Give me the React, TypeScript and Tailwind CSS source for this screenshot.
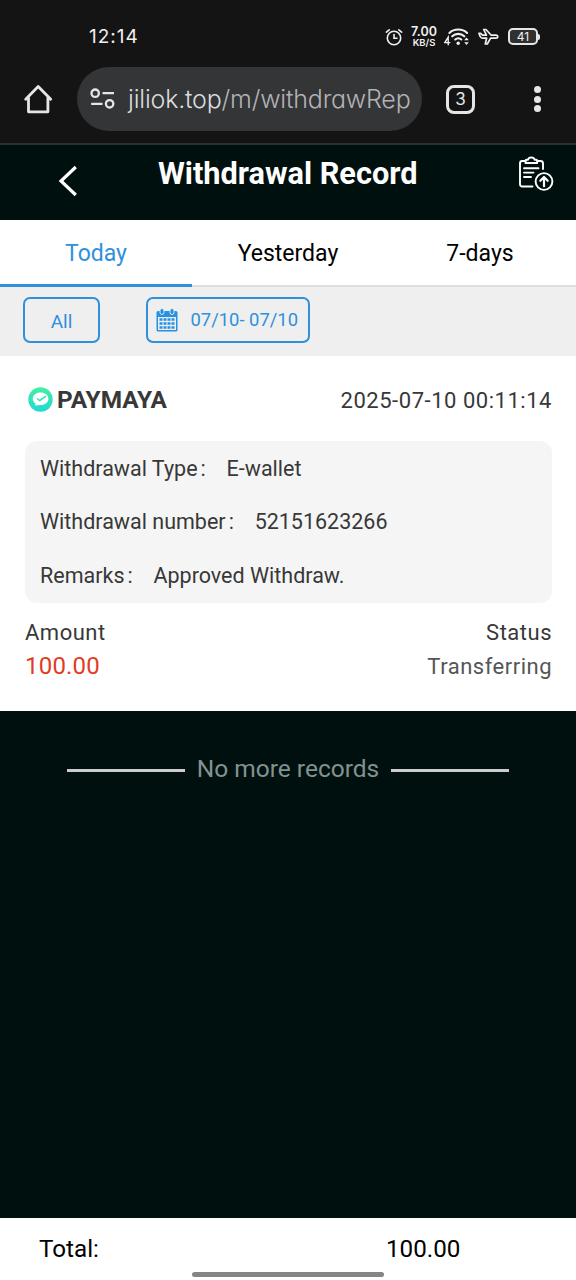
import type { ReactNode } from 'react';

const tabs = [
    { id: 'today', label: 'Today' },
    { id: 'yesterday', label: 'Yesterday' },
    { id: '7-days', label: '7-days' },
];

const details = [
    { label: 'Withdrawal Type', value: 'E-wallet' },
    { label: 'Withdrawal number', value: '52151623266' },
    { label: 'Remarks', value: 'Approved Withdraw.' },
];

function StatusBar() {
    return (
        <div className="flex h-[67px] items-center pt-[6px] pl-[89px] font-['Inter',sans-serif] text-[#f0f0f0]">
            <span className="w-[296px] pt-[2px] text-[19px] tracking-[1px]">12:14</span>
            <svg className="h-[18px] w-[18px]" viewBox="0 0 18 18" fill="none" stroke="currentColor" strokeWidth="1.6" strokeLinecap="round">
                <circle cx="9" cy="10" r="6.7" />
                <path d="M9 6.5V10.3H12M1.4 4.2L4.2 1.8M16.6 4.2L13.8 1.8" />
            </svg>
            <div className="ml-[7px] w-[28px] text-center font-semibold whitespace-nowrap">
                <div className="text-[12.5px] leading-[12px]">7.00</div>
                <div className="text-[9.5px] leading-[10px]">KB/S</div>
            </div>
            <svg className="ml-[6px] h-[20px] w-[26px]" viewBox="0 0 26 20" fill="none" stroke="currentColor" strokeWidth="2.1" strokeLinecap="round">
                <path d="M5.4 6C10 1.4 18.5 1.4 23.1 6M8.2 9.3C11.5 6.1 17 6.1 20.3 9.3M11.2 12.5C13 11 15.5 11 17.3 12.5" />
                <circle cx="14.2" cy="16.2" r="1.7" fill="currentColor" stroke="none" />
                <path d="M4.2 17.8V10.2L0.8 15.6H5.8" strokeWidth="1.4" />
                <path d="M20.2 13.2L22.5 10.4L24.8 13.2ZM20.2 15.2H24.8L22.5 18Z" fill="currentColor" stroke="none" />
            </svg>
            <svg className="ml-[8px] h-[18px] w-[21px]" viewBox="0 0 21 18" fill="none" stroke="currentColor" strokeWidth="1.7" strokeLinejoin="round">
                <path d="M1 5.4H2.6L4.6 7.2H8.4L5.7 1.5H8L13.2 7.2H18C20.4 7.5 20.4 10 18 10.2H12.6L9.3 16H7.3L8.6 10.2H4.5C3 10.2 1.8 8.6 1 5.4Z" />
            </svg>
            <div className="ml-[9px] flex h-[17px] w-[30px] items-center justify-center rounded-[5px] border-2 border-[#e6e6e6] bg-[#303030] text-[12px] leading-none">41</div>
            <div className="h-[6px] w-[2px] rounded-r bg-[#e6e6e6]" />
        </div>
    );
}

function AddressBar() {
    return (
        <div className="flex h-[64px] items-center pl-[23px] text-[#e6e6e6]">
            <svg className="h-[32px] w-[30px]" viewBox="0 0 30 32" fill="none" stroke="currentColor" strokeWidth="2.8" strokeLinejoin="round" strokeLinecap="round">
                <path d="M2.7 16.2L15.2 3.5L27.7 16.2M5.5 14.5V28.8H24.9V14.5" />
            </svg>
            <div className="ml-[24px] flex h-[64px] w-[345px] items-center rounded-full bg-[#343537] pl-[13px]">
                <svg className="h-[22px] w-[26px] shrink-0" viewBox="0 0 26 22" fill="none" stroke="currentColor" strokeWidth="2.3">
                    <circle cx="5.2" cy="5.2" r="3.7" />
                    <circle cx="19.6" cy="15.8" r="3.7" />
                    <path d="M12.5 5.2H24M1.2 15.8H12.5" />
                </svg>
                <span className="ml-[12px] font-['Inter',sans-serif] text-[25px] leading-none font-light tracking-[-0.2px] whitespace-nowrap text-[#b2b3b5] [font-feature-settings:'cv11']">
                    <span className="text-[#dcdcde]">jiliok.top</span>/m/withdrawRep
                </span>
            </div>
            <div className="ml-[24px] flex h-[29px] w-[29px] items-center justify-center rounded-[8px] border-[3px] border-[#e6e6e6] font-['Inter',sans-serif] text-[17px] leading-none">3</div>
            <div className="ml-[59px] flex flex-col gap-[2.6px]">
                <i className="h-[7px] w-[7px] rounded-full bg-[#e6e6e6]" />
                <i className="h-[7px] w-[7px] rounded-full bg-[#e6e6e6]" />
                <i className="h-[7px] w-[7px] rounded-full bg-[#e6e6e6]" />
            </div>
        </div>
    );
}

function Header() {
    return (
        <header className="flex h-[75px] pl-[57px] text-white">
            <svg className="mt-[20px] h-[32px] w-[22px]" viewBox="0 0 22 32" fill="none" stroke="currentColor" strokeWidth="3.2">
                <path d="M18.8 2L4 16L18.8 30" />
            </svg>
            <h1 className="mt-[11px] ml-[79px] w-[360px] text-[30.7px] leading-[36px] font-bold whitespace-nowrap">Withdrawal Record</h1>
            <svg className="mt-[11px] h-[36px] w-[36px] shrink-0" viewBox="0 0 36 36" fill="none" stroke="currentColor" strokeWidth="1.9" strokeLinecap="round" strokeLinejoin="round">
                <path d="M7.5 5H4Q2 5 2 7.5V28Q2 30.5 4.3 30.5H14.5M19.5 5H22.5Q25 5 25 7.5V13" />
                <path d="M7.5 7V4.5Q7.5 3.7 8.5 3.7H10Q10.5 1.5 13.3 1.5T16.6 3.7H18.2Q19.2 3.7 19.2 4.5V7Z" />
                <path d="M6 12.2H20.5M6 16.6H15.5M6 21H13" />
                <circle cx="26" cy="25.5" r="8.4" />
                <path d="M26 30.2V21.3M22.3 24.8L26 21L29.7 24.8" strokeWidth="2.2" />
            </svg>
        </header>
    );
}

function CalendarIcon() {
    return (
        <svg className="h-[24px] w-[22px]" viewBox="0 0 22 24">
            <path d="M2 3H20Q21.5 3 21.5 4.5V22Q21.5 23.5 20 23.5H2Q.5 23.5.5 22V4.5Q.5 3 2 3ZM2 9V22H20V9Z" fill="#2491e4" fillRule="evenodd" />
            <rect x="4" y="0.5" width="4" height="6" rx="2" fill="#2491e4" stroke="#efefef" strokeWidth="0.9" />
            <rect x="14" y="0.5" width="4" height="6" rx="2" fill="#2491e4" stroke="#efefef" strokeWidth="0.9" />
            <path d="M3.5 11.5H18.5M3.5 15.5H18.5M3.5 19.5H18.5" stroke="#2491e4" strokeWidth="2.6" strokeDasharray="3 1" />
        </svg>
    );
}

function Filter({ className, children }: { className: string; children: ReactNode }) {
    return (
        <button className={`flex h-[46px] items-center rounded-[7px] border-2 border-[#2f90dc] text-[#2f90dc] ${className}`}>
            {children}
        </button>
    );
}

function RecordCard() {
    return (
        <section className="h-[355px] bg-white pt-[28px] pr-[24px] pl-[25px] text-[#383838]">
            <div className="flex h-[30px] items-center">
                <svg className="mt-px ml-[3px] h-[25px] w-[25px]" viewBox="0 0 25 25">
                    <defs>
                        <linearGradient id="maya" x1="0" y1="0" x2="0" y2="1">
                            <stop stopColor="#42f0a2" />
                            <stop offset="1" stopColor="#20d9d5" />
                        </linearGradient>
                    </defs>
                    <circle cx="12.5" cy="12.5" r="12.2" fill="url(#maya)" />
                    <path d="M12.5 5.6C17 5.6 20.4 8.2 20.4 11.8C20.4 15.5 17 18.1 12.5 18.1L7 18.5L7.5 16.4C5.7 15.2 4.8 13.6 4.8 11.8C4.8 8.2 8.1 5.6 12.5 5.6Z" fill="white" />
                    <path d="M9 11.5L11.7 13.5L18.2 9.2" fill="none" stroke="#2ce5bd" strokeWidth="1.5" />
                </svg>
                <span className="ml-[4px] pt-[2px] text-[24.4px] font-bold">PAYMAYA</span>
                <time className="ml-auto pt-[2px] text-[22px] tracking-[0.53px]">2025-07-10 00:11:14</time>
            </div>
            <dl className="mt-[27px] h-[162px] rounded-[12px] bg-[#f5f5f5] px-[15px] pt-px text-[21.5px]">
                {details.map((item) => (
                    <div key={item.label} className="flex h-[53.7px] items-center whitespace-nowrap">
                        <dt>{item.label}</dt>
                        <span className="w-[29px] pl-[3px]">:</span>
                        <dd>{item.value}</dd>
                    </div>
                ))}
            </dl>
            <div className="mt-[11px] flex h-[34px] items-center justify-between pt-[2px] text-[22px] tracking-[0.5px]">
                <span>Amount</span>
                <span>Status</span>
            </div>
            <div className="flex h-[34px] items-center justify-between pt-[2px]">
                <span className="text-[24px] tracking-[0.2px] text-[#e13c24]">100.00</span>
                <span className="text-[22px] tracking-[0.5px] text-[#555]">Transferring</span>
            </div>
        </section>
    );
}

export default function App() {
    return (
        <div className="flex h-[1280px] w-[576px] flex-col overflow-hidden bg-[#00100e] font-['Roboto',sans-serif]">
            <div className="h-[145px] shrink-0 border-b-2 border-[#293230] bg-[#141414]">
                <StatusBar />
                <AddressBar />
            </div>
            <Header />

            <nav className="grid h-[67px] shrink-0 grid-cols-3 bg-white text-[23px]">
                {tabs.map((tab) => (
                    <button
                        key={tab.id}
                        className={
                            tab.id === 'today'
                                ? 'border-b-3 border-[#2f90dc] pt-[4px] text-[#2f90dc]'
                                : 'border-b-2 border-[#dedede] pt-[3px] text-black'
                        }
                    >
                        {tab.label}
                    </button>
                ))}
            </nav>

            <div className="flex h-[69px] shrink-0 gap-[46px] bg-[#efefef] pt-[10px] pl-[23px]">
                <Filter className="w-[77px] justify-center pt-[4px] text-[19px]">All</Filter>
                <Filter className="w-[164px] pl-[8px] text-[18.4px]">
                    <CalendarIcon />
                    <span className="ml-[12.5px] whitespace-nowrap">07/10- 07/10</span>
                </Filter>
            </div>

            <RecordCard />

            {/* End of list */}
            <div className="flex items-center px-[67px] pt-[41px] text-[24.5px] leading-[34px] text-[#829290]">
                <div className="mt-[2px] h-[3px] w-[118px] bg-[#cbcecd]" />
                <span className="flex-1 text-center whitespace-nowrap">No more records</span>
                <div className="mt-[2px] h-[3px] w-[118px] bg-[#cbcecd]" />
            </div>

            <footer className="mt-auto h-[62px] bg-white pt-[14px] text-[24.2px] leading-[34px] text-black">
                <div className="flex">
                    <span className="w-[386px] pl-[39px]">Total:</span>
                    <span>100.00</span>
                </div>
                <div className="mx-auto mt-[6px] h-[5px] w-[192px] rounded-full bg-[#858585]" />
            </footer>
        </div>
    );
}
